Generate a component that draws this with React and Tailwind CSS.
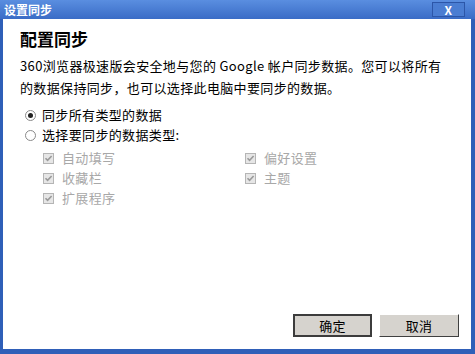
const FONT = { fontFamily: '"Noto Sans CJK SC", "Liberation Sans", sans-serif' }

const TYPES = [
  ['自动填写', '偏好设置'],
  ['收藏栏', '主题'],
  ['扩展程序', null],
]

function Radio({ checked }) {
  return (
    <span className="w-[11px] h-[11px] rounded-full border border-[#8a8a8a] bg-white flex items-center justify-center shrink-0">
      {checked && <span className="w-[5px] h-[5px] rounded-full bg-[#222]" />}
    </span>
  )
}

function Check({ label }) {
  return (
    <div className="flex items-center gap-[8px] h-[20px]">
      <span className="w-[11px] h-[11px] border border-[#b5b5b5] bg-[#e6e6e6] flex items-center justify-center shrink-0">
        <svg width="9" height="9" viewBox="0 0 9 9">
          <path d="M1.5 4.2 L3.6 6.4 L7.6 2" stroke="#9a9a9a" strokeWidth="1.6" fill="none" />
        </svg>
      </span>
      <span className="text-[#a8a8a8]">{label}</span>
    </div>
  )
}

export default function App() {
  return (
    <div className="w-[475px] h-[354px] flex flex-col bg-[#2f5fb8] text-[13px] tracking-[0.35px] text-black" style={FONT}>
      {/* title bar */}
      <div className="h-[19px] flex items-center justify-between pl-[4px] pr-[10px] bg-gradient-to-b from-[#5a8ee0] to-[#3a6cc6]">
        <span className="text-white text-[12px] font-bold leading-none tracking-normal">设置同步</span>
        <span className="w-[33px] h-[15px] border border-[#2c56a8] bg-[#4a7dd2] flex items-center justify-center text-white text-[12px] font-bold leading-none">
          X
        </span>
      </div>

      <div className="flex-1 flex flex-col bg-white ml-[3px] mr-[4px] mb-[5px] pl-[17px] pr-[12px]">
        <h1 className="mt-[9px] text-[17px] font-bold leading-[22px] tracking-normal">配置同步</h1>
        <p className="mt-[5px] leading-[22px]">
          360浏览器极速版会安全地与您的 Google 帐户同步数据。您可以将所有
          <br />
          的数据保持同步，也可以选择此电脑中要同步的数据。
        </p>

        <div className="mt-[6px] ml-[5px]">
          <div className="flex items-center gap-[6px] h-[20px]">
            <Radio checked />
            <span>同步所有类型的数据</span>
          </div>
          <div className="flex items-center gap-[6px] h-[20px]">
            <Radio />
            <span>选择要同步的数据类型:</span>
          </div>
          <div className="ml-[18px] mt-[3px]">
            {TYPES.map(([a, b], i) => (
              <div key={i} className="flex">
                <div className="w-[202px]">
                  <Check label={a} />
                </div>
                {b && <Check label={b} />}
              </div>
            ))}
          </div>
        </div>

        <div className="flex-1" />

        <div className="flex justify-end gap-[7px] mb-[12px]">
          <button className="w-[79px] h-[23px] bg-[#d6d3ce] border-2 border-[#3c3c3c] text-[13px] leading-none">
            确定
          </button>
          <button className="w-[80px] h-[23px] bg-[#d6d3ce] border border-t-white border-l-white border-b-[#404040] border-r-[#404040] text-[13px] leading-none">
            取消
          </button>
        </div>
      </div>
    </div>
  )
}
